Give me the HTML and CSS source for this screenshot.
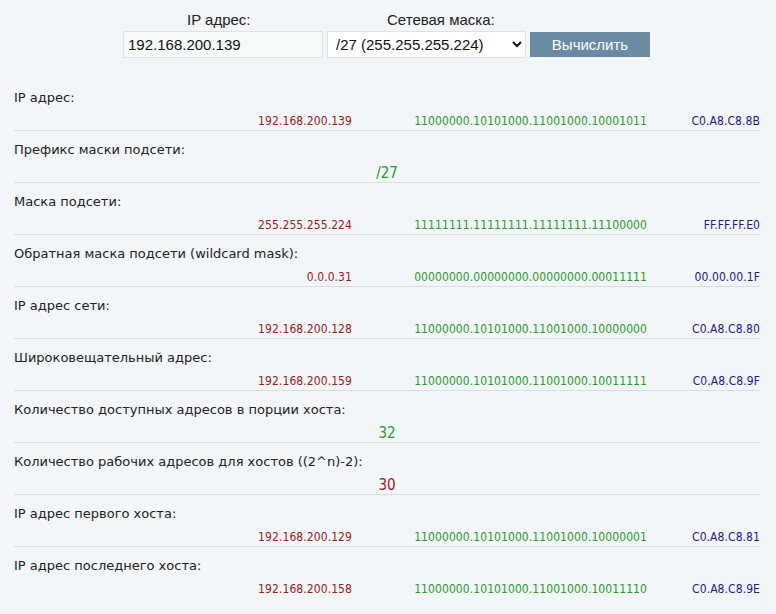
FILE: index.html
```html
<!DOCTYPE html>
<html lang="ru">
<head>
<meta charset="utf-8">
<title>IP калькулятор</title>
<link rel="stylesheet" href="styles.css">
</head>
<body>
<form class="calc">
  <div class="field field-ip">
    <label class="field-label">IP адрес:</label>
    <input class="ip-input" type="text" value="192.168.200.139">
  </div>
  <div class="field field-mask">
    <label class="field-label">Сетевая маска:</label>
    <select class="mask-select"><option>/27 (255.255.255.224)</option></select>
  </div>
  <div class="field field-btn">
    <button class="calc-btn" type="button">Вычислить</button>
  </div>
</form>

<div class="results">
  <div class="row">
    <div class="label">IP адрес:</div>
    <div class="vals"><span class="ip">192.168.200.139</span><span class="bin">11000000.10101000.11001000.10001011</span><span class="hex">C0.A8.C8.8B</span></div>
  </div>
  <div class="row">
    <div class="label">Префикс маски подсети:</div>
    <div class="single green">/27</div>
  </div>
  <div class="row">
    <div class="label">Маска подсети:</div>
    <div class="vals"><span class="ip">255.255.255.224</span><span class="bin">11111111.11111111.11111111.11100000</span><span class="hex">FF.FF.FF.E0</span></div>
  </div>
  <div class="row">
    <div class="label">Обратная маска подсети (wildcard mask):</div>
    <div class="vals"><span class="ip">0.0.0.31</span><span class="bin">00000000.00000000.00000000.00011111</span><span class="hex">00.00.00.1F</span></div>
  </div>
  <div class="row">
    <div class="label">IP адрес сети:</div>
    <div class="vals"><span class="ip">192.168.200.128</span><span class="bin">11000000.10101000.11001000.10000000</span><span class="hex">C0.A8.C8.80</span></div>
  </div>
  <div class="row">
    <div class="label">Широковещательный адрес:</div>
    <div class="vals"><span class="ip">192.168.200.159</span><span class="bin">11000000.10101000.11001000.10011111</span><span class="hex">C0.A8.C8.9F</span></div>
  </div>
  <div class="row">
    <div class="label">Количество доступных адресов в порции хоста:</div>
    <div class="single green">32</div>
  </div>
  <div class="row">
    <div class="label">Количество рабочих адресов для хостов ((2^n)-2):</div>
    <div class="single red">30</div>
  </div>
  <div class="row">
    <div class="label">IP адрес первого хоста:</div>
    <div class="vals"><span class="ip">192.168.200.129</span><span class="bin">11000000.10101000.11001000.10000001</span><span class="hex">C0.A8.C8.81</span></div>
  </div>
  <div class="row">
    <div class="label">IP адрес последнего хоста:</div>
    <div class="vals"><span class="ip">192.168.200.158</span><span class="bin">11000000.10101000.11001000.10011110</span><span class="hex">C0.A8.C8.9E</span></div>
  </div>
</div>
</body>
</html>
```

FILE: styles.css
```css
html, body {
  margin: 0;
  padding: 0;
  background: #f2f6f9;
}
body {
  width: 776px;
  height: 614px;
  overflow: hidden;
  font-family: "DejaVu Sans", Tahoma, sans-serif;
  color: #222;
}

.calc {
  display: flex;
  align-items: flex-end;
  padding: 11px 0 0 123px;
  height: 47px;
  gap: 4px;
  font-family: "Liberation Sans", Arial, sans-serif;
  font-size: 15px;
}
.field {
  display: flex;
  flex-direction: column;
}
.field-label {
  line-height: 18px;
  color: #222;
  margin-bottom: 2px;
}
.field-ip .field-label {
  padding-left: 64px;
}
.field-mask .field-label {
  padding-left: 60px;
}
.ip-input {
  box-sizing: border-box;
  width: 200px;
  height: 27px;
  margin: 0;
  padding: 0 4px;
  border: 1px solid #dfe4e2;
  background: #f7fbf7;
  font: 15px "Liberation Sans", Arial, sans-serif;
  color: #111;
  outline: none;
}
.mask-select {
  box-sizing: border-box;
  width: 199px;
  height: 27px;
  margin: 0;
  padding: 0 2px 0 4px;
  border: 1px solid #dfe4e2;
  border-radius: 0;
  background: #fff;
  font: 15px "Liberation Sans", Arial, sans-serif;
  color: #111;
}
.calc-btn {
  width: 120px;
  height: 25px;
  margin: 0 0 1px 0;
  border: none;
  background: #6b8ba3;
  color: #fff;
  font: 15px "Liberation Sans", Arial, sans-serif;
  padding: 0;
}

.results {
  margin: 21px 16px 0 14px;
}
.row {
  height: 51px;
  box-sizing: content-box;
  border-bottom: 1px solid #d7dde2;
}
.row:last-child {
  border-bottom-color: transparent;
}
.label {
  padding-top: 9px;
  line-height: 20px;
  font-size: 13px;
  color: #222;
}
.vals {
  display: grid;
  grid-template-columns: 338px 295px 113px;
  margin-top: 5px;
  line-height: 16px;
  font-family: "DejaVu Sans Condensed", "DejaVu Sans", sans-serif;
  font-size: 12px;
  letter-spacing: 0.08px;
}
.vals span {
  text-align: right;
}
.ip { color: #9b1a1a; }
.bin { color: #2a9a2a; }
.hex { color: #1b1b8a; }
.single {
  text-align: center;
  font-family: "DejaVu Sans Condensed", "DejaVu Sans", sans-serif;
  font-size: 15px;
  line-height: 20px;
  margin-top: 3px;
}
.green { color: #2a9a2a; }
.red { color: #9b1a1a; }
```
